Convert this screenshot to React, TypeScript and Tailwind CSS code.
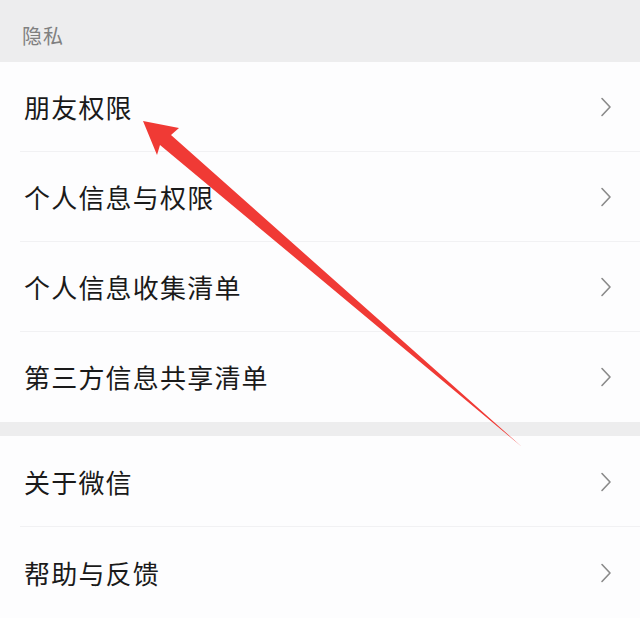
import React from "react";

const privacyItems = ["朋友权限", "个人信息与权限", "个人信息收集清单", "第三方信息共享清单"];
const aboutItems = ["关于微信", "帮助与反馈"];

function Chevron() {
  return (
    <svg width="12" height="20" viewBox="0 0 12 20" fill="none" className="mr-[28px]">
      <path d="M2 1.5 L10 10 L2 18.5" stroke="#8a8a8a" strokeWidth="1.6" strokeLinecap="round" strokeLinejoin="round" />
    </svg>
  );
}

function Row({ label, last, tall }: { label: string; last?: boolean; tall?: boolean }) {
  return (
    <div className={`relative flex items-center justify-between bg-[#fdfdfe] pl-[24px] ${tall ? "h-[91px]" : "h-[90px]"}`}>
      <span className="text-[26px] leading-none tracking-[1.2px] text-[#1a1a1a]">{label}</span>
      <Chevron />
      {!last && <div className="absolute bottom-0 left-[20px] right-0 h-px bg-[#f1f1f3]" />}
    </div>
  );
}

export default function App() {
  return (
    <div
      className="relative h-[618px] w-[640px] overflow-hidden bg-[#ededee]"
      style={{ fontFamily: '"Noto Sans CJK SC", "Noto Sans", sans-serif' }}
    >
      <div className="flex h-[62px] items-center pl-[22px] pt-[10px] text-[20px] tracking-[1px] text-[#808080]">隐私</div>
      <div>
        {privacyItems.map((item, i) => (
          <Row key={item} label={item} last={i === privacyItems.length - 1} />
        ))}
      </div>
      <div className="h-[14px]" />
      <div>
        {aboutItems.map((item, i) => (
          <Row key={item} label={item} tall last={i === aboutItems.length - 1} />
        ))}
      </div>

      {/* red annotation arrow */}
      <svg className="pointer-events-none absolute left-0 top-0" width="640" height="618" viewBox="0 0 640 618">
        <polygon
          points="143,121 179,128 171,135 522,447 160,145 157,155"
          fill="#f03a35"
        />
      </svg>
    </div>
  );
}
